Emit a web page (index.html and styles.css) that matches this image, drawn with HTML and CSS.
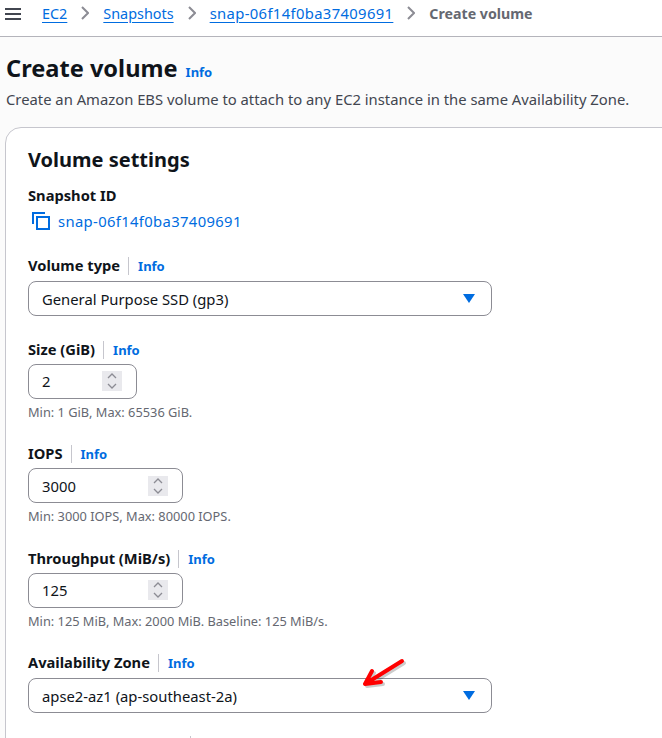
FILE: index.html
```html
<!DOCTYPE html>
<html lang="en">

<head>
    <meta charset="UTF-8">
    <meta name="viewport" content="width=device-width, initial-scale=1.0">
    <title>Create volume</title>
    <link rel="stylesheet" href="styles.css">
</head>

<body>
    <header class="topbar">
        <svg class="menu-icon" width="16" height="14" viewBox="0 0 16 14">
            <path d="M0 2h16M0 7h16M0 12h16" stroke="#424650" stroke-width="2" fill="none" />
        </svg>
        <nav class="crumbs">
            <a href="#">EC2</a>
            <svg class="crumb-sep" width="8" height="14" viewBox="0 0 8 14"><path d="M1 1l6 6-6 6" /></svg>
            <a href="#">Snapshots</a>
            <svg class="crumb-sep" width="8" height="14" viewBox="0 0 8 14"><path d="M1 1l6 6-6 6" /></svg>
            <a class="snap-link" href="#">snap-06f14f0ba37409691</a>
            <svg class="crumb-sep" width="8" height="14" viewBox="0 0 8 14"><path d="M1 1l6 6-6 6" /></svg>
            <span class="crumb-current">Create volume</span>
        </nav>
    </header>

    <main class="content">
        <div class="page-head">
            <h1>Create volume</h1>
            <a class="info" href="#">Info</a>
        </div>
        <p class="page-desc">Create an Amazon EBS volume to attach to any EC2 instance in the same Availability Zone.</p>

        <section class="card">
            <h2>Volume settings</h2>

            <div class="field field-snapshot">
                <div class="label-row"><span class="label">Snapshot ID</span></div>
                <div class="snapshot-id">
                    <svg width="18" height="18" viewBox="0 0 18 18">
                        <path d="M1 12V1h12" fill="none" stroke="#006ce0" stroke-width="2" />
                        <rect x="5" y="5" width="12" height="12" fill="none" stroke="#006ce0" stroke-width="2" />
                    </svg>
                    <a class="snap-link" href="#">snap-06f14f0ba37409691</a>
                </div>
            </div>

            <div class="field">
                <div class="label-row"><span class="label">Volume type</span><a class="info" href="#">Info</a></div>
                <div class="control select">
                    <span>General Purpose SSD (gp3)</span>
                    <svg width="12" height="9" viewBox="0 0 12 9"><path d="M0 0h12L6 9z" fill="#006ce0" /></svg>
                </div>
            </div>

            <div class="field">
                <div class="label-row"><span class="label">Size (GiB)</span><a class="info" href="#">Info</a></div>
                <div class="control number size-input">
                    <span>2</span>
                    <div class="spinner">
                        <svg width="10" height="16" viewBox="0 0 10 16"><path d="M1 5l4-4 4 4M1 11l4 4 4-4" /></svg>
                    </div>
                </div>
                <p class="hint">Min: 1 GiB, Max: 65536 GiB.</p>
            </div>

            <div class="field">
                <div class="label-row"><span class="label">IOPS</span><a class="info" href="#">Info</a></div>
                <div class="control number">
                    <span>3000</span>
                    <div class="spinner">
                        <svg width="10" height="16" viewBox="0 0 10 16"><path d="M1 5l4-4 4 4M1 11l4 4 4-4" /></svg>
                    </div>
                </div>
                <p class="hint">Min: 3000 IOPS, Max: 80000 IOPS.</p>
            </div>

            <div class="field">
                <div class="label-row"><span class="label">Throughput (MiB/s)</span><a class="info" href="#">Info</a></div>
                <div class="control number">
                    <span>125</span>
                    <div class="spinner">
                        <svg width="10" height="16" viewBox="0 0 10 16"><path d="M1 5l4-4 4 4M1 11l4 4 4-4" /></svg>
                    </div>
                </div>
                <p class="hint">Min: 125 MiB, Max: 2000 MiB. Baseline: 125 MiB/s.</p>
            </div>

            <div class="field">
                <div class="label-row"><span class="label">Availability Zone</span><a class="info" href="#">Info</a></div>
                <div class="control select">
                    <span>apse2-az1 (ap-southeast-2a)</span>
                    <svg width="12" height="9" viewBox="0 0 12 9"><path d="M0 0h12L6 9z" fill="#006ce0" /></svg>
                </div>
                <!-- annotation from the screenshot -->
                <svg class="arrow" width="46" height="44" viewBox="0 0 46 44">
                    <path class="arrow-shadow" d="M44 15L7 38M14 25L7 38L23 36" />
                    <path class="arrow-line" d="M42 13L5 36M12 23L5 36L21 34" />
                </svg>
            </div>

            <div class="next-divider"></div>
        </section>
    </main>
</body>

</html>
```

FILE: styles.css
```css
html,
body {
    height: 738px;
    overflow: hidden;
}

body {
    margin: 0;
    font-family: "Noto Sans", sans-serif;
    font-size: 14.800px;
    color: #0f141a;
    background-color: #fbfbfb;
}

a {
    color: #006ce0;
}

.topbar {
    display: flex;
    align-items: center;
    height: 36px;
    padding-left: 5px;
    border-bottom: 1px solid #b4b4bb;
    background-color: #fff;
}

.menu-icon {
    margin-right: 21px;
    margin-top: -9px;
}

.crumbs {
    display: flex;
    align-items: center;
    gap: 14px;
    margin-top: -10px;
    font-size: 14.400px;
}

.crumbs a {
    text-underline-offset: 3px;
}

.snap-link {
    font-size: 14.800px;
    letter-spacing: 0.350px;
}

.crumb-sep path {
    fill: none;
    stroke: #8c8c94;
    stroke-width: 2;
}

.crumb-current {
    font-size: 14.200px;
    font-weight: 700;
    color: #656871;
}

.content {
    padding: 14px 0 0 6px;
}

.page-head {
    display: flex;
    align-items: baseline;
    gap: 8px;
}

h1 {
    margin: 0;
    font-size: 23.600px;
    line-height: 34px;
    font-weight: 700;
}

.info {
    font-size: 13px;
    font-weight: 700;
    text-decoration: none;
}

.page-desc {
    margin: 4px 0 0;
    line-height: 20px;
    color: #424650;
}

.card {
    box-sizing: border-box;
    width: 680px;
    height: 640px;
    margin: 18px 0 0 -1px;
    padding: 17px 22px;
    border: 1px solid #c6c6cd;
    border-radius: 16px;
    background-color: #fff;
}

h2 {
    margin: 0;
    font-size: 20px;
    line-height: 30px;
    font-weight: 700;
}

.field {
    position: relative;
    margin-bottom: 23.500px;
}

.field-snapshot {
    margin-top: 10px;
    margin-bottom: 22px;
}

.field-snapshot .label-row {
    margin-bottom: 4px;
}

.label-row {
    display: flex;
    align-items: baseline;
    height: 20px;
    margin-bottom: 5px;
}

.label {
    font-size: 14.700px;
    font-weight: 700;
}

.label-row .info {
    margin-left: 8px;
    padding-left: 9px;
    border-left: 1px solid #c6c6cd;
    line-height: 18px;
}

.snapshot-id {
    display: flex;
    align-items: center;
    gap: 8px;
    height: 24px;
    padding-left: 4px;
}

.snapshot-id a {
    text-decoration: none;
}

.control {
    box-sizing: border-box;
    display: flex;
    align-items: center;
    justify-content: space-between;
    height: 35px;
    border: 1px solid #8c8c94;
    border-radius: 8px;
    background-color: #fff;
}

.select {
    width: 464px;
    margin: 6px 0 -1px;
    padding: 0 16px 0 13px;
}

.number {
    width: 155px;
    padding: 0 14px 0 13px;
}

.size-input {
    width: 109px;
}

.spinner {
    display: flex;
    align-items: center;
    justify-content: center;
    width: 20px;
    height: 20px;
    background-color: #e9e9ed;
}

.spinner path {
    fill: none;
    stroke: #8c8c94;
    stroke-width: 1.300;
}

.hint {
    margin: 4px 0 -1px;
    font-size: 12.800px;
    line-height: 18px;
    color: #656871;
}

.arrow {
    position: absolute;
    left: 332px;
    top: -4px;
    overflow: visible;
}

.arrow path {
    fill: none;
    stroke-linecap: round;
    stroke-linejoin: round;
    stroke-width: 4;
}

.arrow-line {
    stroke: #f00;
}

.arrow-shadow {
    stroke: rgba(0, 0, 0, 0.2);
}

.next-divider {
    width: 1px;
    height: 16px;
    margin-left: 162px;
    background-color: #c6c6cd;
}
```
